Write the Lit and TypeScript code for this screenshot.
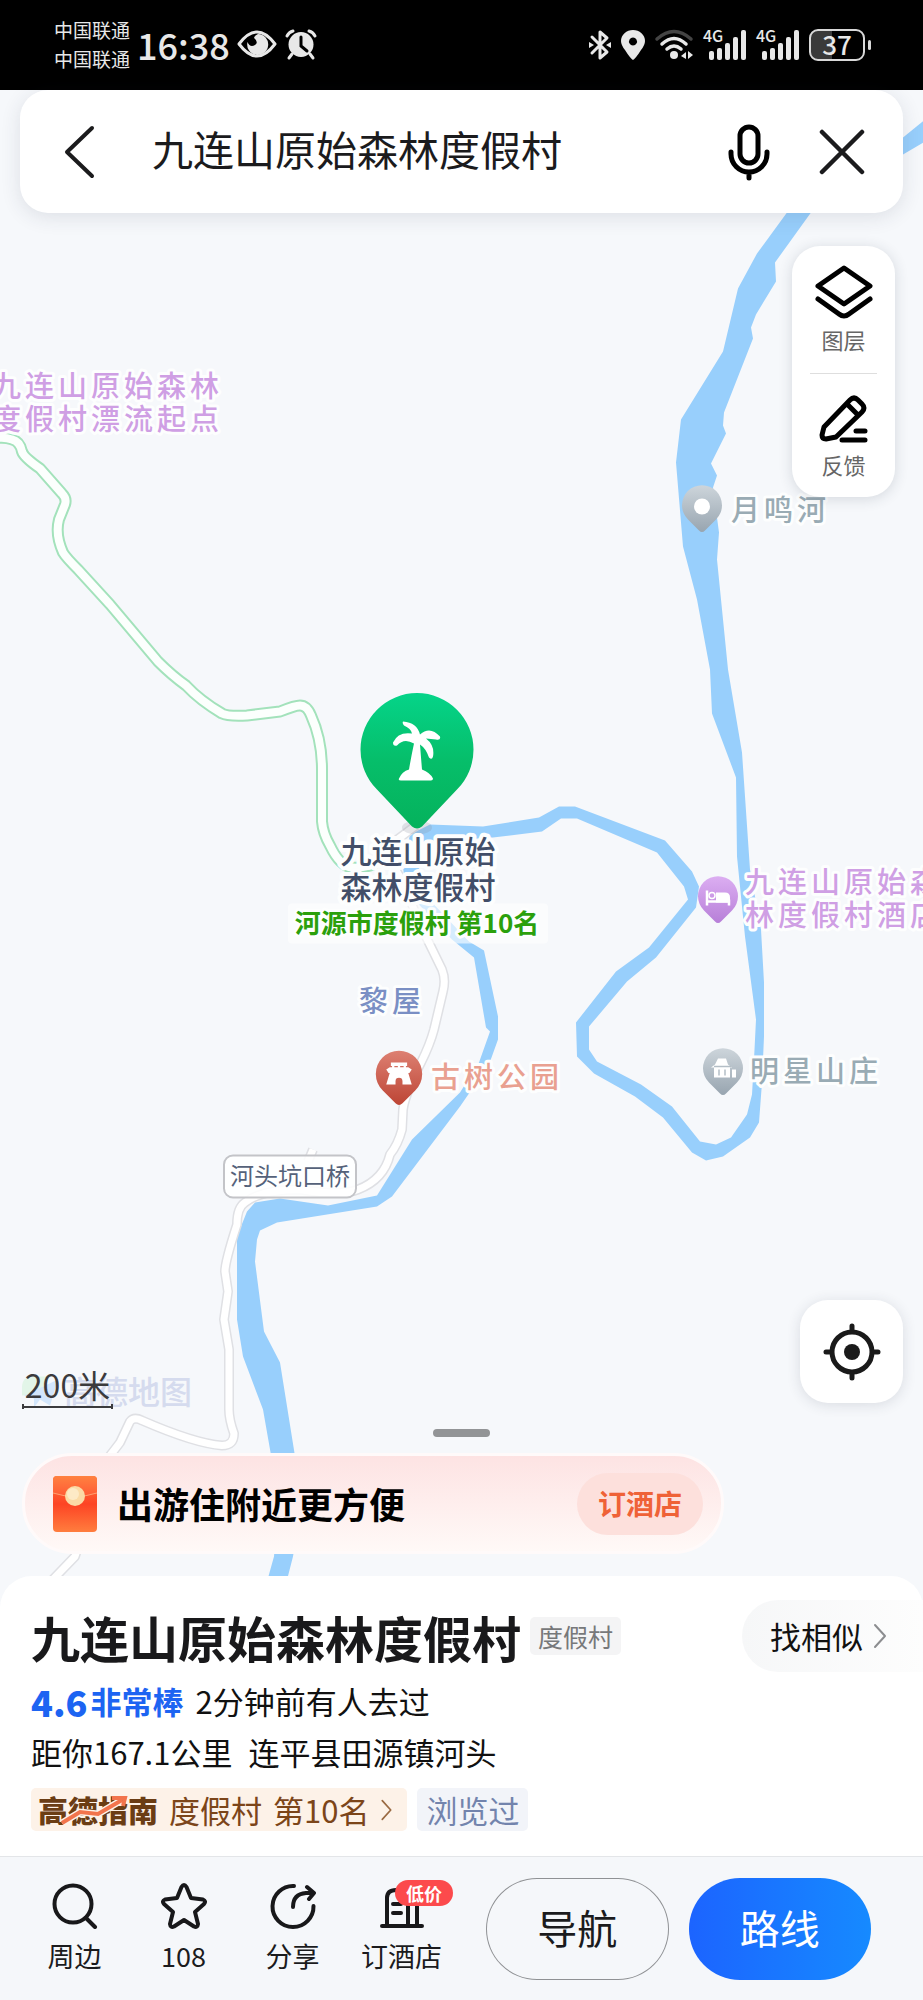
import { LitElement, html, css, svg } from "lit";
import { customElement } from "lit/decorators.js";

const RIVER = `M930 116 L903 138 L840 172 L787 213 L757 254 L738 289 L723 352 L681 420 L676 463 L683 547 L697 600
L710 670 L712 714 L736 778 L737 857 L745 937 L756 1020 L754 1060 L752 1095 L747 1115 L731 1138 L716 1145 L700 1142
L672 1107 L641 1085 L597 1062 L589 1050 L589 1027 L627 982 L656 958 L696 908 L699 887 L692 872 L665 841
L575 807 L559 807 L539 818 L483 827 L430 825 L410 835 L403 867 L405 885 L417 903 L452 940 L474 958 L486 1028
L490 1032 L479 1063 L460 1093 L412 1140 L377 1196 L328 1206 L280 1199 L255 1203 L247 1212 L237 1237 L237 1320
L243 1357 L263 1410 L273 1467 L277 1520 L274 1557 L262 1600 L282 1600 L293 1557 L300 1515 L296 1463 L280 1363
L264 1332 L255 1262 L257 1240 L260 1231 L277 1223 L377 1207 L392 1197 L460 1107 L489 1065 L498 1040 L498 1017
L484 951 L469 942 L434 905 L422 885 L418 862 L430 842 L493 838 L542 832 L561 819 L577 819 L657 853 L684 887
L688 900 L649 948 L616 972 L576 1023 L577 1057 L594 1074 L635 1097 L663 1118 L692 1153 L706 1161 L723 1157
L750 1138 L759 1123 L762 1083 L764 1037 L764 983 L761 930 L750 870 L742 753 L728 670 L717 560 L719 533 L713 488
L717 476 L711 464 L726 434 L723 426 L724 413 L753 339 L751 328 L756 315 L776 282 L775 263 L811 213 L860 178
L903 155 L930 139Z`;

const GREEN_ROAD = `M-6 439 Q4 437 12 440 Q20 442 22 452 Q24 458 40 469 L62 494 Q67 499 65 505 L59 520
Q55 535 63 553 Q66 558 78 570 L110 605 L158 662 Q172 676 186 686 Q200 701 222 714 Q228 717 247 716 L280 712
Q295 706 300 706 Q307 706 311 716 Q322 740 322 770 L322 822 Q323 834 330 846 Q340 867 352 868 Q362 869 376 864`;

const ROADS = [
  "M416 826 L396 841 L390 860 L404 885 L420 925 L442 970 Q446 980 443 992 L434 1030 Q430 1045 421 1063 Q405 1095 403 1110 L402 1130 Q398 1145 390 1155 Q384 1180 358 1190 Q340 1197 300 1190 Q262 1190 245 1203 Q237 1208 237 1225 Q225 1262 225 1272 L228 1292 L224 1320 L229 1350 L229 1410 Q229 1420 234 1434 Q234 1446 222 1446 Q195 1444 142 1421 Q134 1417 130 1422 L120 1443 L107 1460 L75 1557 L48 1585",
  "M313 1150 L308 1162",
];

interface MapLabel {
  x: number;
  y: number;
  kind: string;
  lines: string[];
}

const LABELS: MapLabel[] = [
  { x: -8, y: 397, kind: "violet", lines: ["九连山原始森林", "度假村漂流起点"] },
  { x: 731, y: 521, kind: "slate", lines: ["月鸣河"] },
  { x: 745, y: 893, kind: "violet", lines: ["九连山原始森", "林度假村酒店"] },
  { x: 750, y: 1082, kind: "slate", lines: ["明星山庄"] },
  { x: 431, y: 1088, kind: "coral", lines: ["古树公园"] },
  { x: 359, y: 1012, kind: "village", lines: ["黎屋"] },
];

const PIN = "M-3 -2 L-14 -13 A20 20 0 1 1 14 -13 L3 -2 Q0 1 -3 -2Z";

const chevron = html`<svg class="chevron" viewBox="0 0 14 26" aria-hidden="true">
  <path d="M2 2 L12 13 L2 24" fill="none" stroke="currentColor" stroke-width="2" stroke-linecap="round" stroke-linejoin="round" />
</svg>`;

@customElement("status-bar")
export class StatusBar extends LitElement {
  static styles = css`
    :host {
      display: flex;
      align-items: center;
      justify-content: space-between;
      height: 90px;
      padding: 0 52px 0 54px;
      box-sizing: border-box;
      background: #000;
      color: #e8e8e8;
    }
    .side {
      display: flex;
      align-items: center;
      gap: 10px;
    }
    .clock {
      gap: 7px;
      padding-bottom: 2px;
    }
    .carriers {
      font-size: 19px;
      line-height: 29px;
    }
    .time {
      font-size: 36px;
      font-weight: 500;
      line-height: 48px;
    }
    svg {
      display: block;
      overflow: visible;
    }
    .battery {
      display: flex;
      align-items: center;
      gap: 3px;
    }
    .level {
      width: 56px;
      height: 32px;
      box-sizing: border-box;
      border: 2px solid #d8d8d8;
      border-radius: 9px;
      background: linear-gradient(90deg, #3a3a3a 40%, #000 40%);
      font-size: 26px;
      font-weight: 500;
      line-height: 26px;
      text-align: center;
    }
    .nub {
      width: 3px;
      height: 10px;
      border-radius: 2px;
      background: #d8d8d8;
    }
    .gen {
      font-size: 16px;
      font-weight: 500;
    }
  `;

  private signal() {
    return html`<svg width="43" height="30" viewBox="0 0 43 30" fill="#e8e8e8">
      <text class="gen" x="0" y="12">4G</text>
      <rect x="6" y="21" width="5" height="9" rx="2" />
      <rect x="14" y="18" width="5" height="12" rx="2" />
      <rect x="22" y="13" width="5" height="17" rx="2" />
      <rect x="30" y="7" width="5" height="23" rx="2" />
      <rect x="38" y="0" width="5" height="30" rx="2" />
    </svg>`;
  }

  render() {
    return html`
      <div class="side clock">
        <div class="carriers"><div>中国联通</div><div>中国联通</div></div>
        <span class="time">16:38</span>
        <svg width="40" height="30" viewBox="0 0 40 30">
          <path d="M2 15 Q20 -9 38 15 Q20 39 2 15Z" fill="none" stroke="#e8e8e8" stroke-width="3" stroke-linejoin="round" />
          <path d="M21 5 A10.500 10.500 0 1 1 10.500 13 Q13 19 18 16 Q22 13 17 9 Q18 6 21 5Z" fill="#e8e8e8" />
        </svg>
        <svg width="34" height="30" viewBox="-1 0 34 30">
          <circle cx="16" cy="15.500" r="12.500" fill="#e8e8e8" />
          <path d="M2 7 Q4 3 8 2 M30 7 Q28 3 24 2 M7 25 L4 29 M25 25 L28 29" stroke="#e8e8e8" stroke-width="3" stroke-linecap="round" fill="none" />
          <path d="M16 8 V17 L22 22" stroke="#000" stroke-width="3" stroke-linecap="round" fill="none" />
        </svg>
      </div>
      <div class="side">
        <svg width="22" height="30" viewBox="0 0 22 30">
          <path d="M3 7 L18 22 L11 28 V2 L18 8 L3 23" fill="none" stroke="#e8e8e8" stroke-width="3" stroke-linejoin="round" stroke-linecap="round" />
          <path d="M0 12 L5 15 L0 18Z M22 12 L17 15 L22 18Z" fill="#e8e8e8" />
        </svg>
        <svg width="24" height="30" viewBox="0 0 24 30">
          <path fill-rule="evenodd" d="M12 30 Q9 28 4 20 Q0 15 0 11 A12 11 0 0 1 24 11 Q24 15 20 20 Q15 28 12 30Z M12 7.500 A4 4 0 1 0 12.010 7.500Z" fill="#e8e8e8" />
        </svg>
        <svg width="38" height="30" viewBox="0 0 38 30" fill="none" stroke="#e8e8e8" stroke-width="3.500" stroke-linecap="round">
          <path d="M2 9 Q19 -6 36 9" stroke="#444" />
          <path d="M7 14 Q19 3 31 14" />
          <path d="M12 19 Q19 13 26 19" />
          <circle cx="19" cy="25" r="4" fill="#e8e8e8" stroke="none" />
          <path d="M31 22 V29 L26 26Z M33 29 V21 L38 25Z" fill="#e8e8e8" stroke="none" />
        </svg>
        ${this.signal()} ${this.signal()}
        <div class="battery"><div class="level">37</div><div class="nub"></div></div>
      </div>
    `;
  }
}

@customElement("map-canvas")
export class MapCanvas extends LitElement {
  static styles = css`
    :host {
      display: block;
      position: relative;
      overflow: hidden;
    }
    svg {
      position: absolute;
      inset: 0;
      width: 100%;
      height: 100%;
      display: block;
    }
    text {
      paint-order: stroke;
      stroke: #fdfefe;
      stroke-width: 6px;
      stroke-linejoin: round;
    }
    .poi {
      font-size: 29px;
      font-weight: 500;
      letter-spacing: 4px;
    }
    .violet {
      fill: #cf9fe4;
    }
    .slate {
      fill: #99abb4;
    }
    .coral {
      fill: #e9a090;
    }
    .village {
      fill: #7a8fc4;
    }
    .main {
      font-size: 31px;
      font-weight: 500;
      fill: #424e68;
      text-anchor: middle;
      stroke-width: 8px;
    }
    .rank {
      font-size: 26px;
      font-weight: 700;
      fill: #2ba00c;
      text-anchor: middle;
    }
    .bridge {
      font-size: 24px;
      fill: #55627a;
      text-anchor: middle;
      stroke: none;
    }
    .watermark {
      font-size: 32px;
      font-weight: 500;
      fill: #d5dbee;
      stroke: none;
    }
  `;

  private label(l: MapLabel) {
    return l.lines.map((t, i) => svg`<text class="poi ${l.kind}" x=${l.x} y=${l.y + i * 33}>${t}</text>`);
  }

  render() {
    return html`<svg viewBox="0 90 923 1487" preserveAspectRatio="xMidYMid slice">
      <defs>
        <linearGradient id="green" x1="0" y1="0" x2="0" y2="1">
          <stop offset="0" stop-color="#05d489" />
          <stop offset="0.5" stop-color="#06be6a" />
          <stop offset="1" stop-color="#05b25c" />
        </linearGradient>
        <linearGradient id="grey" x1="0" y1="0" x2="0" y2="1">
          <stop offset="0" stop-color="#cdd5db" />
          <stop offset="1" stop-color="#98a5b0" />
        </linearGradient>
        <linearGradient id="violet" x1="0" y1="0" x2="0" y2="1">
          <stop offset="0" stop-color="#dcaef2" />
          <stop offset="1" stop-color="#b77fd8" />
        </linearGradient>
        <linearGradient id="red" x1="0" y1="0" x2="0" y2="1">
          <stop offset="0" stop-color="#dd8072" />
          <stop offset="1" stop-color="#bd4535" />
        </linearGradient>
      </defs>

      <path d=${RIVER} fill="#98cffc" />
      ${ROADS.map((d) => svg`<path d=${d} fill="none" stroke="#dfe0e4" stroke-width="10" stroke-linejoin="round" />
        <path d=${d} fill="none" stroke="#fff" stroke-width="7" stroke-linejoin="round" />`)}
      <path d=${GREEN_ROAD} fill="none" stroke="#a3e2bb" stroke-width="12" stroke-linejoin="round" />
      <path d=${GREEN_ROAD} fill="none" stroke="#fcfffd" stroke-width="8" stroke-linejoin="round" />

      <rect x="288" y="904" width="260" height="40" rx="4" fill="#fff" opacity="0.6" />

      <g transform="translate(702 533)">
        <path d=${PIN} fill="url(#grey)" />
        <circle cx="0" cy="-26" r="8" fill="#fff" />
      </g>
      <g transform="translate(718 924)">
        <path d=${PIN} fill="url(#violet)" />
        <path d="M-11 -33 V-18 M11 -18 V-24 M-11 -22 H11" stroke="#fff" stroke-width="2.500" fill="none" />
        <path d="M-2 -31 H7 Q12 -31 12 -26 V-21 H-2Z" fill="#fff" />
        <circle cx="-6" cy="-28" r="3" fill="none" stroke="#fff" stroke-width="1.500" />
      </g>
      <g transform="translate(723 1096)">
        <path d=${PIN} fill="url(#grey)" />
        <path d="M-12 -28 L-8 -31 L-5 -37 H3 L5 -31 L9 -28 H7 V-18 H-9 V-28Z M9 -26 H13 V-18 H9Z" fill="#fff" />
        <path d="M-4 -26 V-20 M2 -26 V-20 M-9 -29 H8" stroke="#b4bec6" stroke-width="1.500" />
      </g>
      <g transform="translate(399 1106) scale(1.160)">
        <path d=${PIN} fill="url(#red)" />
        <path d="M-7 -37 H7 V-34 H-7Z M-11 -31 L-8 -33 H8 L11 -31 L9 -28 H-9Z M-8 -28 H8 L11 -18 H3 V-21 A3 3 0 0 0 -3 -21 V-18 H-11Z" fill="#fff" />
        <path d="M-5 -35 V-32 M0 -35 V-32 M5 -35 V-32" stroke="#fff" stroke-width="2" />
      </g>

      <ellipse cx="417" cy="828" rx="15" ry="7" fill="#8a8f99" opacity="0.22" />
      <path d="M412 827 L377 790 A56.500 56.500 0 1 1 457 790 L422 827 Q417 831 412 827Z" fill="url(#green)" />
      <path
        fill="#fff"
        d="M403 722 Q417 723 420 735 Q430 726 440 737 Q441 741 436 740 L426 739 Q435 746 433 757 Q432 761 429 758 Q426 749 420 745 Q421 758 422 770 Q430 773 433 779 Q433 781 431 781 H401 Q398 781 399 779 Q402 772 409 770 Q411 758 414 744 Q404 738 397 746 Q393 747 393 743 Q398 732 412 734 Q411 729 404 726 Q402 724 403 722Z"
      />

      ${LABELS.map((l) => this.label(l))}
      <text class="main" x="418" y="863">九连山原始</text>
      <text class="main" x="418" y="899">森林度假村</text>
      <text class="rank" x="417" y="933">河源市度假村 第10名</text>

      <rect x="224" y="1156" width="132" height="42" rx="9" fill="#fff" fill-opacity="0.88" stroke="#c3c4c8" stroke-width="2" />
      <text class="bridge" x="290" y="1185">河头坑口桥</text>

      <path d="M22 1388 Q22 1377 33 1377 L50 1377 L38 1394 L22 1396Z" fill="#e2f5e8" />
      <path d="M24 1396 L58 1380 L50 1406 L40 1400 L34 1408 L34 1399Z" fill="#d3e6fb" />
      <text class="watermark" x="64" y="1404">高德地图</text>
    </svg>`;
  }
}

@customElement("app-root")
export class AppRoot extends LitElement {
  static styles = css`
    :host {
      display: flex;
      flex-direction: column;
      min-height: 100vh;
      background: #f6f8fb;
      color: #1b1b1d;
      font-family: "Noto Sans CJK SC", "Noto Sans", sans-serif;
    }
    button,
    input {
      font: inherit;
      color: inherit;
      border: 0;
      padding: 0;
      margin: 0;
      background: none;
    }
    a {
      color: inherit;
      text-decoration: none;
    }
    svg {
      display: block;
    }
    h1,
    p {
      margin: 0;
    }

    .stage {
      flex: 1;
      display: grid;
      grid-template: minmax(0, 1fr) / minmax(0, 1fr);
    }
    map-canvas,
    .overlay {
      grid-area: 1 / 1;
    }
    .overlay {
      position: relative;
      display: flex;
      flex-direction: column;
      padding: 0 20px 22px;
    }
    .search {
      display: flex;
      align-items: center;
      height: 123px;
      padding: 0 38px 0 43px;
      background: #fff;
      border-radius: 28px;
      box-shadow: 0 4px 20px rgba(40, 50, 70, 0.12);
    }
    .search input {
      flex: 1;
      min-width: 0;
      margin: 0 30px 0 57px;
      padding-bottom: 8px;
      font-size: 41px;
      line-height: 60px;
      outline: none;
    }
    .search .mic {
      margin-right: 49px;
    }
    .tools {
      align-self: flex-end;
      width: 103px;
      margin: 33px 8px auto 0;
      padding: 19px 0 17px;
      box-sizing: border-box;
      display: flex;
      flex-direction: column;
      align-items: center;
      background: #fff;
      border-radius: 28px;
      box-shadow: 0 2px 14px rgba(40, 50, 70, 0.16);
      font-size: 22px;
      line-height: 32px;
      color: #666;
    }
    .tools button {
      display: flex;
      flex-direction: column;
      align-items: center;
      gap: 4px;
    }
    .divider {
      width: 67px;
      height: 1px;
      margin: 18px 0 20px;
      background: #dedede;
    }
    .corner {
      display: flex;
      justify-content: space-between;
      align-items: flex-end;
    }
    .scale {
      width: 91px;
      margin-left: 2px;
      font-size: 32px;
      line-height: 40px;
      color: #3b3b3d;
      text-align: center;
    }
    .ruler {
      height: 5px;
      border: solid #3b3b3d;
      border-width: 0 2px;
      background: linear-gradient(transparent 40%, #3b3b3d 40% 80%, transparent 80%);
    }
    .locate {
      width: 103px;
      height: 103px;
      margin-bottom: 6px;
      display: grid;
      place-items: center;
      background: #fff;
      border-radius: 28px;
      box-shadow: 0 2px 14px rgba(40, 50, 70, 0.14);
    }
    .handle {
      align-self: center;
      width: 57px;
      height: 8px;
      margin: 20px 0 16px;
      border-radius: 4px;
      background: #929496;
    }
    .promo {
      width: 702px;
      max-width: 100%;
      height: 101px;
      margin-left: 2px;
      padding: 0 18px 0 28px;
      box-sizing: border-box;
      display: flex;
      align-items: center;
      gap: 20px;
      border: 3px solid #fffafa;
      border-radius: 50px;
      background: linear-gradient(#fde3e3, #fff9f7);
    }
    .promo strong {
      flex: 1;
      padding-bottom: 2px;
      font-size: 36px;
      line-height: 50px;
      color: #000;
    }
    .promo button {
      width: 126px;
      height: 62px;
      padding-bottom: 2px;
      border-radius: 31px;
      background: #fde0dc;
      color: #ef6237;
      font-size: 28px;
      font-weight: 700;
      line-height: 60px;
    }

    .sheet {
      padding: 24px 0 25px 31px;
      background: #fff;
      border-radius: 32px 32px 0 0;
      color: #111;
      font-size: 31px;
      line-height: 44px;
    }
    .row {
      display: flex;
      align-items: center;
      margin-top: 7px;
    }
    .head {
      margin: 0;
    }
    h1 {
      font-size: 49px;
      line-height: 71px;
      color: #19191b;
    }
    .kind {
      margin-left: 9px;
      padding: 0 8px;
      border-radius: 5px;
      background: #f4f4f5;
      color: #77787a;
      font-size: 25px;
      line-height: 38px;
    }
    .similar {
      display: flex;
      align-items: center;
      gap: 10px;
      height: 72px;
      margin-left: auto;
      padding: 0 36px 0 28px;
      border-radius: 36px 0 0 36px;
      background: linear-gradient(90deg, #f6f7f8, #fdfdfd);
    }
    .chevron {
      width: 14px;
      height: 26px;
      color: #8c8d90;
    }
    .score {
      font-size: 36px;
      font-weight: 900;
      color: #1d64f2;
    }
    .praise {
      margin: 0 12px 0 3px;
      font-weight: 700;
      color: #1d64f2;
    }
    .address {
      gap: 16px;
    }
    .tags {
      gap: 10px;
      margin-top: 14px;
      line-height: 43px;
    }
    .guide {
      display: flex;
      align-items: center;
      gap: 11px;
      padding: 0 14px 0 7px;
      border-radius: 5px;
      background: #fdf2e8;
      color: #7c4519;
    }
    .guide .chevron {
      width: 13px;
      height: 22px;
      color: #9a6a42;
    }
    .brand {
      display: grid;
      font-size: 30px;
      font-weight: 900;
      color: #6b3d14;
    }
    .brand > * {
      grid-area: 1 / 1;
    }
    .seen {
      padding: 0 9px;
      border-radius: 5px;
      background: #f2f4f9;
      color: #7384ad;
    }

    .dock {
      display: flex;
      align-items: flex-start;
      gap: 30px;
      padding: 21px 52px 20px 20px;
      border-top: 1px solid #e3e5e8;
      background: #f5f7fa;
    }
    .tabs {
      display: flex;
      padding-top: 5px;
    }
    .tabs button {
      position: relative;
      width: 109px;
      display: flex;
      flex-direction: column;
      align-items: center;
      gap: 8px;
      font-size: 27px;
      line-height: 38px;
    }
    .badge {
      position: absolute;
      left: 48px;
      top: -3px;
      width: 58px;
      border-radius: 13px;
      background: #fc4a4c;
      color: #fff;
      font-size: 18px;
      font-weight: 700;
      line-height: 26px;
    }
    .actions {
      flex: 1;
      display: flex;
      gap: 20px;
    }
    .actions button {
      flex: 1;
      height: 102px;
      padding-bottom: 4px;
      border-radius: 51px;
      font-size: 40px;
      line-height: 60px;
    }
    .outline {
      box-shadow: inset 0 0 0 1px #8f9194;
    }
    .actions .primary {
      background: linear-gradient(90deg, #1c64ff, #168aff);
      color: #fff;
    }
  `;

  render() {
    return html`
      <status-bar></status-bar>
      <main class="stage">
        <map-canvas></map-canvas>
        <div class="overlay">
          <form class="search" role="search">
            <button type="button" aria-label="返回">
              <svg width="32" height="54" viewBox="0 0 32 54"><path d="M29 3 L4 27 L29 51" fill="none" stroke="#1b1b1d" stroke-width="4" stroke-linecap="round" stroke-linejoin="round" /></svg>
            </button>
            <input type="text" aria-label="搜索地点" value="九连山原始森林度假村" />
            <button type="button" class="mic" aria-label="语音搜索">
              <svg width="42" height="58" viewBox="0 0 42 58" fill="none" stroke="#000" stroke-width="5">
                <rect x="12" y="4" width="18" height="36" rx="9" />
                <path d="M3 29 V31 A18 18 0 0 0 39 31 V29 M21 49 V55" stroke-linecap="round" />
              </svg>
            </button>
            <button type="button" aria-label="关闭">
              <svg width="46" height="46" viewBox="0 0 46 46"><path d="M3 3 L43 43 M43 3 L3 43" stroke="#1b1b1d" stroke-width="4.500" stroke-linecap="round" /></svg>
            </button>
          </form>

          <div class="tools">
            <button type="button">
              <svg width="58" height="54" viewBox="0 0 58 54" fill="none" stroke="#000" stroke-width="5" stroke-linejoin="round" stroke-linecap="round">
                <path d="M29 3 L55 21 L29 39 L3 21Z" />
                <path d="M3 34 L24 49 Q29 53 34 49 L55 34" />
              </svg>
              图层
            </button>
            <div class="divider"></div>
            <button type="button">
              <svg width="50" height="50" viewBox="0 0 50 50" fill="none" stroke="#000" stroke-width="5" stroke-linejoin="round" stroke-linecap="round">
                <path d="M5 33 L31 6 Q35 2 39 6 L43 10 Q47 14 43 18 L17 43 L7 45 Q3 45 3 41Z M28 10 L39 21" />
                <path d="M37 37 H46 M23 46 H46" />
              </svg>
              反馈
            </button>
          </div>

          <div class="corner">
            <div class="scale">
              200米
              <div class="ruler"></div>
            </div>
            <button type="button" class="locate" aria-label="定位">
              <svg width="58" height="58" viewBox="0 0 58 58" fill="none" stroke="#1a1a1a" stroke-width="5" stroke-linecap="round">
                <circle cx="29" cy="29" r="20" />
                <circle cx="29" cy="29" r="8" fill="#1a1a1a" stroke="none" />
                <path d="M29 3 V8 M29 50 V55 M3 29 H8 M50 29 H55" />
              </svg>
            </button>
          </div>
          <div class="handle"></div>
          <div class="promo">
            <svg width="44" height="56" viewBox="0 0 44 56" aria-hidden="true">
              <defs>
                <linearGradient id="env" x1="0" y1="0" x2="0" y2="1">
                  <stop offset="0" stop-color="#ff7a40" />
                  <stop offset="0.5" stop-color="#fd4424" />
                  <stop offset="1" stop-color="#ff7d3e" />
                </linearGradient>
                <linearGradient id="flap" x1="0" y1="0" x2="0" y2="1">
                  <stop offset="0" stop-color="#ff8140" />
                  <stop offset="1" stop-color="#ff5a35" />
                </linearGradient>
              </defs>
              <rect width="44" height="56" rx="4" fill="url(#env)" />
              <path d="M0 17 V4 Q0 0 4 0 H40 Q44 0 44 4 V17 Q22 24 0 17Z" fill="url(#flap)" />
              <path d="M0 17 Q22 24 44 17" fill="none" stroke="#ffa070" />
              <circle cx="22" cy="20" r="10" fill="#fbdba6" />
              <circle cx="20" cy="18" r="6" fill="#fdeac6" />
            </svg>
            <strong>出游住附近更方便</strong>
            <button type="button">订酒店</button>
          </div>
        </div>
      </main>

      <section class="sheet">
        <div class="row head">
          <h1>九连山原始森林度假村</h1>
          <span class="kind">度假村</span>
          <button type="button" class="similar">找相似 ${chevron}</button>
        </div>
        <p class="row"><span class="score">4.6</span><span class="praise">非常棒</span><span>2分钟前有人去过</span></p>
        <p class="row address"><span>距你167.1公里</span><span>连平县田源镇河头</span></p>
        <div class="row tags">
          <a class="guide" href="#rank">
            <span class="brand">
              <span>高德指南</span>
              <svg width="120" height="43" viewBox="0 0 120 43" aria-hidden="true">
                <path d="M24 35 L42 24 L60 26 L84 12" fill="none" stroke="#fdf2e8" stroke-width="7" />
                <path d="M24 35 L42 24 L60 26 L84 12 M74 10 H87 L85 18" fill="none" stroke="#f2744c" stroke-width="4" />
              </svg>
            </span>
            <span>度假村</span>
            <span>第10名</span>
            ${chevron}
          </a>
          <span class="seen">浏览过</span>
        </div>
      </section>

      <nav class="dock">
        <div class="tabs">
          <button type="button">
            <svg width="46" height="46" viewBox="0 0 46 46" fill="none" stroke="#18181a" stroke-width="4" stroke-linecap="round">
              <circle cx="21" cy="21" r="18.500" />
              <path d="M34 35 L43 44" />
            </svg>
            周边
          </button>
          <button type="button">
            <svg width="46" height="46" viewBox="0 0 46 46">
              <path d="M20.500 4 Q23 0 25.500 4 L30 15 L42 16.500 Q45.500 18 43 21 L34 29 L37 41 Q36.500 45 33 43.500 L23 37 L13 43.500 Q9.500 45 9 41 L12 29 L3 21 Q0.500 18 4 16.500 L16 15Z" fill="none" stroke="#18181a" stroke-width="4" stroke-linejoin="round" />
            </svg>
            108
          </button>
          <button type="button">
            <svg width="46" height="46" viewBox="0 0 46 46" fill="none" stroke="#18181a" stroke-width="4" stroke-linecap="round" stroke-linejoin="round">
              <path d="M24 3 A20.500 20.500 0 1 0 43.500 23" />
              <path d="M23 24 Q23 11 36 10 H43 M37 4 L44 10 L39 16" />
            </svg>
            分享
          </button>
          <button type="button">
            <svg width="46" height="46" viewBox="0 0 46 46" fill="none" stroke="#18181a" stroke-width="4" stroke-linecap="round">
              <path d="M3 43 H43 M8 43 V15 Q8 7 17 7 Q28 8 29 16 V43 M30 17 H38 V43 M14 21 H22 M14 30 H22" />
            </svg>
            订酒店
            <span class="badge">低价</span>
          </button>
        </div>
        <div class="actions">
          <button type="button" class="outline">导航</button>
          <button type="button" class="primary">路线</button>
        </div>
      </nav>
    `;
  }
}
